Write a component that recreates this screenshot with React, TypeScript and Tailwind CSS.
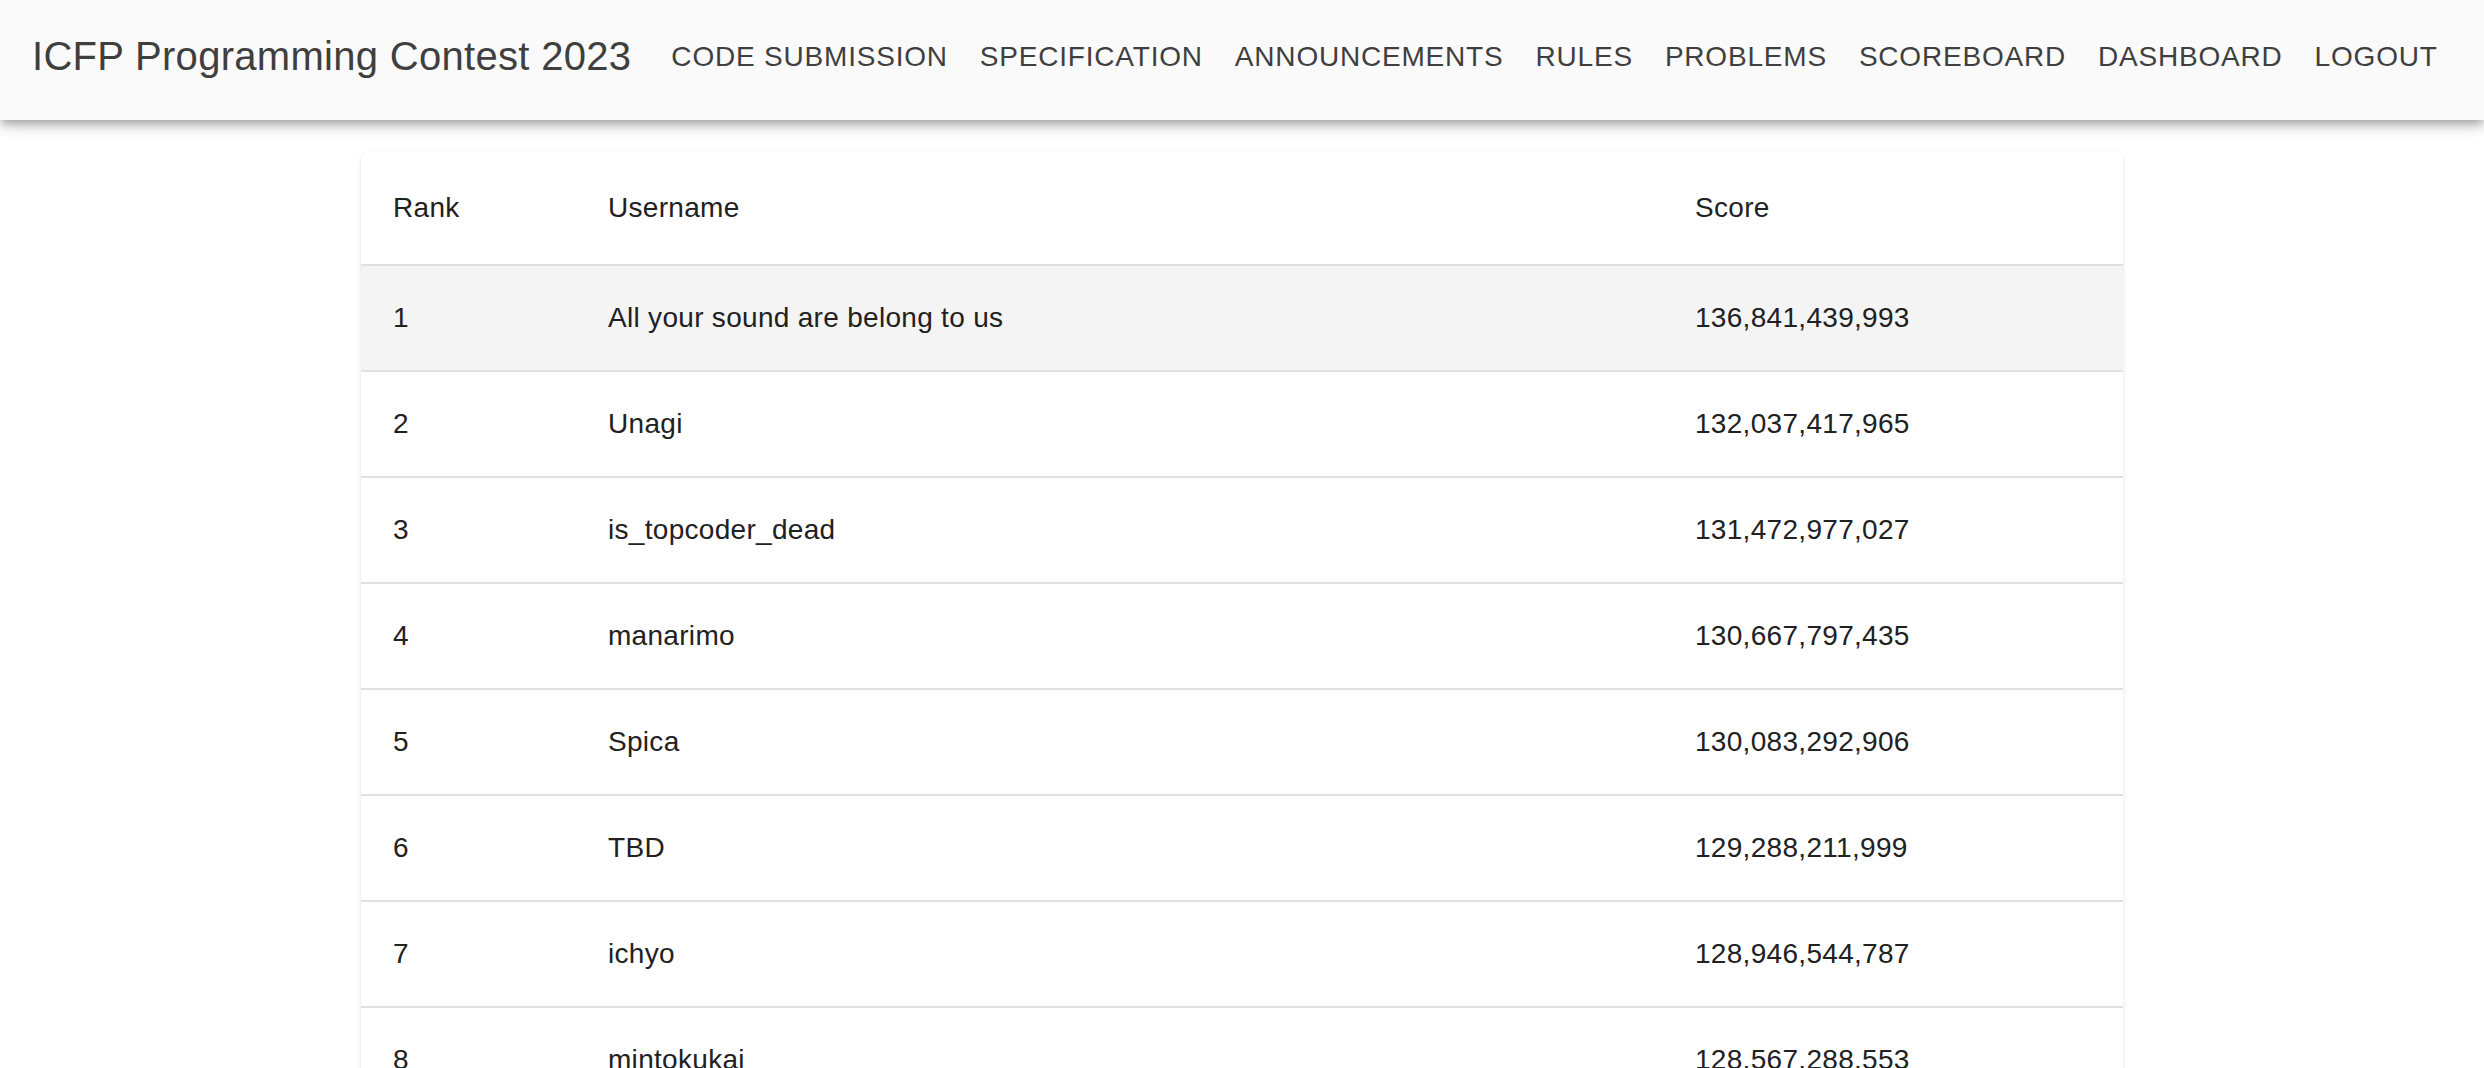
import React from "react";

const nav = [
  "CODE SUBMISSION",
  "SPECIFICATION",
  "ANNOUNCEMENTS",
  "RULES",
  "PROBLEMS",
  "SCOREBOARD",
  "DASHBOARD",
  "LOGOUT",
];

const rows = [
  ["1", "All your sound are belong to us", "136,841,439,993"],
  ["2", "Unagi", "132,037,417,965"],
  ["3", "is_topcoder_dead", "131,472,977,027"],
  ["4", "manarimo", "130,667,797,435"],
  ["5", "Spica", "130,083,292,906"],
  ["6", "TBD", "129,288,211,999"],
  ["7", "ichyo", "128,946,544,787"],
  ["8", "mintokukai", "128,567,288,553"],
];

export default function App() {
  return (
    <div
      className="min-h-screen bg-white"
      style={{ fontFamily: '"Liberation Sans", Arial, Helvetica, sans-serif' }}
    >
      <header className="relative z-10 flex h-[120px] items-center bg-[#fafafa] px-[32px] pb-[8px] text-[#3f3f3f] shadow-[0_4px_8px_-2px_rgba(0,0,0,0.25),0_8px_10px_0_rgba(0,0,0,0.12),0_2px_20px_0_rgba(0,0,0,0.10)]">
        <h1 className="mr-[24px] text-[40px] leading-[1.6] font-normal tracking-[0.3px] whitespace-nowrap">
          ICFP Programming Contest 2023
        </h1>
        <nav className="flex items-center">
          {nav.map((n) => (
            <span
              key={n}
              className="px-[16px] py-[12px] text-[28px] leading-[1.75] tracking-[0.8px] whitespace-nowrap"
            >
              {n}
            </span>
          ))}
        </nav>
      </header>
      <main className="pt-[32px]">
        <div className="mx-auto w-[1762px] overflow-hidden rounded-[8px] bg-white shadow-[0_4px_2px_-2px_rgba(0,0,0,0.12),0_2px_2px_0_rgba(0,0,0,0.08),0_2px_6px_0_rgba(0,0,0,0.08)]">
          <div className="flex items-center border-b-2 border-[#e0e0e0] text-[28px] leading-[48px] tracking-[0.3px] text-[#212121]">
            <div className="w-[215px] shrink-0 p-[32px]">Rank</div>
            <div className="w-[1087px] shrink-0 p-[32px]">Username</div>
            <div className="flex-1 p-[32px]">Score</div>
          </div>
          {rows.map((r, i) => (
            <div
              key={r[0]}
              className={`flex items-center border-b-2 border-[#e0e0e0] text-[28px] leading-[40px] tracking-[0.3px] text-[#212121] ${i === 0 ? "bg-[#f4f4f4]" : "bg-white"}`}
            >
              <div className="w-[215px] shrink-0 p-[32px]">{r[0]}</div>
              <div className="w-[1087px] shrink-0 p-[32px]">{r[1]}</div>
              <div className="flex-1 p-[32px]">{r[2]}</div>
            </div>
          ))}
        </div>
      </main>
    </div>
  );
}
